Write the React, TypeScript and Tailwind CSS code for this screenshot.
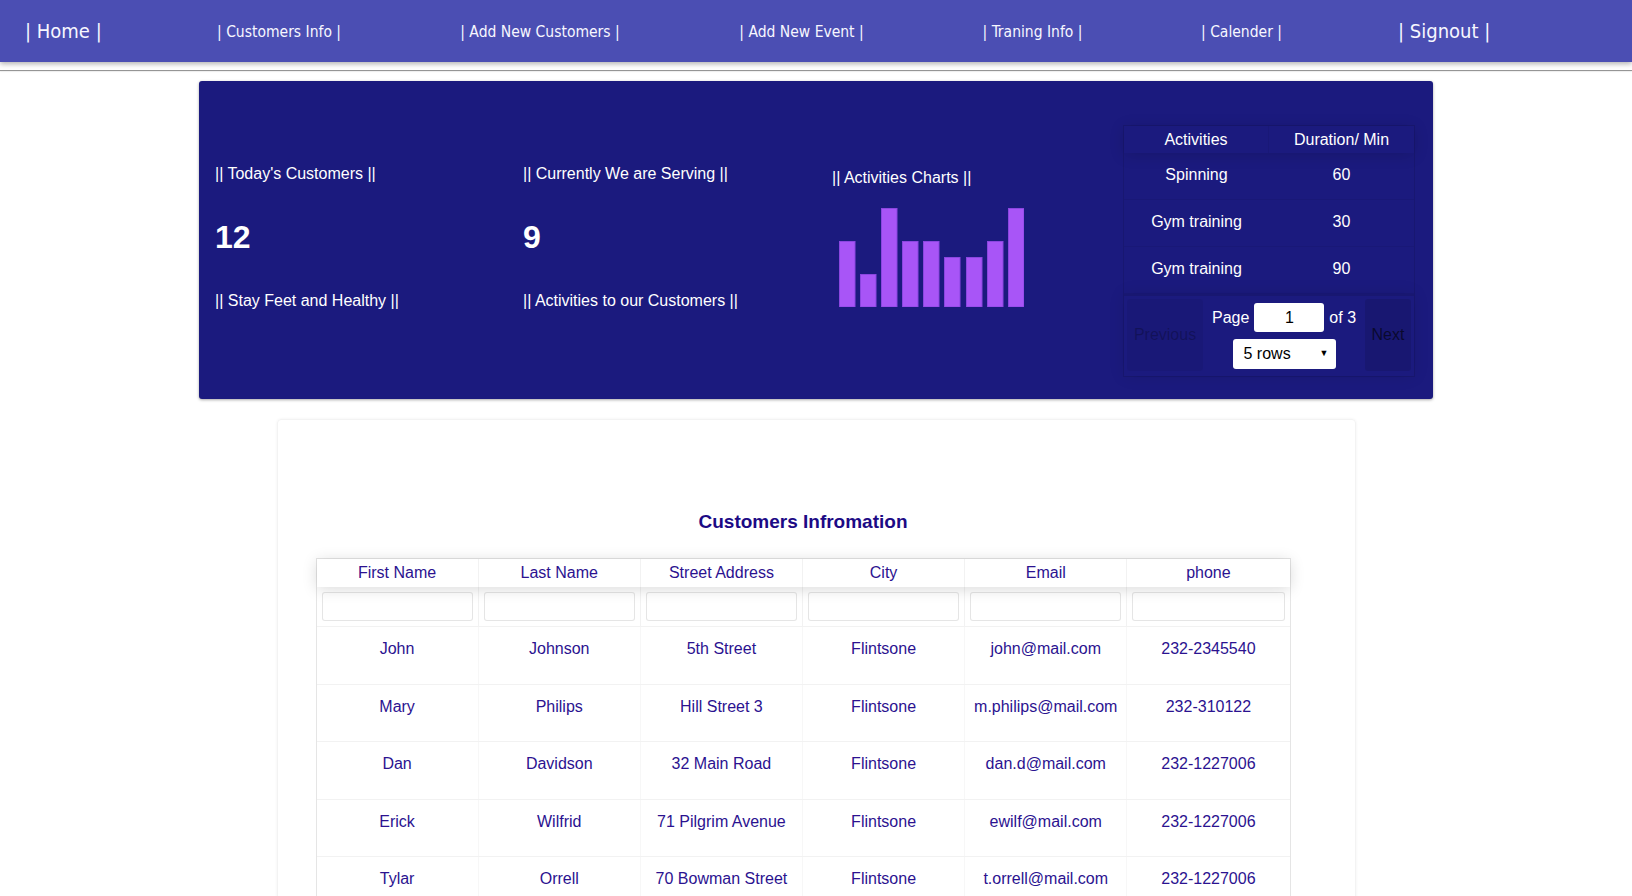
import React from "react";

const navLinks = [
  { label: "| Home |", w: "w-[74px]", big: true },
  { label: "| Customers Info |", w: "w-[124px]" },
  { label: "| Add New Customers |", w: "w-[162px]" },
  { label: "| Add New Event |", w: "w-[125px]" },
  { label: "| Traning Info |", w: "w-[101px]" },
  { label: "| Calender |", w: "w-[79px]" },
  { label: "| Signout |", w: "w-[90px]", big: true },
];

const activities = [
  ["Spinning", "60"],
  ["Gym training", "30"],
  ["Gym training", "90"],
];

const bars = [66, 33, 99, 66, 66, 50, 50, 66, 99];

const columns = ["First Name", "Last Name", "Street Address", "City", "Email", "phone"];

const customers = [
  ["John", "Johnson", "5th Street", "Flintsone", "john@mail.com", "232-2345540"],
  ["Mary", "Philips", "Hill Street 3", "Flintsone", "m.philips@mail.com", "232-310122"],
  ["Dan", "Davidson", "32 Main Road", "Flintsone", "dan.d@mail.com", "232-1227006"],
  ["Erick", "Wilfrid", "71 Pilgrim Avenue", "Flintsone", "ewilf@mail.com", "232-1227006"],
  ["Tylar", "Orrell", "70 Bowman Street", "Flintsone", "t.orrell@mail.com", "232-1227006"],
];

function Navbar() {
  return (
    <nav className="h-[62px] bg-[#4b4eb3] shadow-[0_2px_5px_rgba(0,0,0,0.3)] flex items-center pl-[25px] gap-[118px] text-[#f7f7ff] font-['Liberation_Sans_Narrow','DejaVu_Sans_Condensed',sans-serif]">
      {navLinks.map((l) => (
        <a
          key={l.label}
          className={`${l.w} whitespace-nowrap text-center ${l.big ? "text-[20px] -mt-[1px]" : "text-[15.5px] mt-[4px]"}`}
        >
          {l.label}
        </a>
      ))}
    </nav>
  );
}

function ActivitiesChart() {
  return (
    <svg width="185" height="99" viewBox="0 0 185 99" className="ml-[7px]">
      {bars.map((h, i) => (
        <rect
          key={i}
          x={i * 21 + (i >= 6 ? 1 : 0) + 0.5}
          y={99 - h + 0.5}
          width="15.5"
          height={h - 0.5}
          fill="#a855f7"
          stroke="#8b46e0"
          strokeWidth="1"
        />
      ))}
    </svg>
  );
}

function ActivitiesTable() {
  return (
    <div className="w-[292px] border border-[rgba(0,0,0,0.1)] text-[16px] text-white">
      {/* Header */}
      <div className="grid grid-cols-2 h-[27px] shadow-[0_2px_15px_rgba(0,0,0,0.15)] relative z-10">
        <div className="flex items-center justify-center border-r border-[rgba(0,0,0,0.05)]">Activities</div>
        <div className="flex items-center justify-center">Duration/ Min</div>
      </div>
      {activities.map(([name, min], i) => (
        <div key={i} className="grid grid-cols-2 h-[47px] border-b border-[rgba(0,0,0,0.05)] pt-[13px] leading-[18px]">
          <div className="text-center">{name}</div>
          <div className="text-center">{min}</div>
        </div>
      ))}
      {/* Pagination */}
      <div className="h-[82px] border-t-2 border-[rgba(0,0,0,0.1)] p-[3px] flex shadow-[0_0_15px_rgba(0,0,0,0.1)]">
        <div className="w-[76px] h-[72px] rounded-[3px] bg-[rgba(0,0,0,0.05)] flex items-center justify-center text-[rgba(0,0,0,0.25)]">
          Previous
        </div>
        <div className="flex-1 flex flex-col items-center pt-[4px]">
          <div className="flex items-center gap-[5px] h-[29px]">
            <span>Page</span>
            <div className="w-[70px] h-[29px] bg-white rounded-[3px] text-black flex items-center justify-center">1</div>
            <span>of 3</span>
          </div>
          <div className="mt-[7px] w-[103px] h-[30px] bg-white rounded-[3px] text-black flex items-center justify-between pl-[11px] pr-[7px]">
            <span>5 rows</span>
            <span className="text-[9px]">▼</span>
          </div>
        </div>
        <div className="w-[46px] h-[72px] rounded-[3px] bg-[rgba(0,0,0,0.1)] flex items-center justify-center text-[rgba(0,0,0,0.6)]">
          Next
        </div>
      </div>
    </div>
  );
}

function SummaryPanel() {
  return (
    <section className="mx-auto mt-[10px] w-[1234px] h-[318px] bg-[#1b1a7e] rounded-[3px] shadow-[0_1px_3px_rgba(0,0,0,0.35)] pl-4 pr-[18px] grid grid-cols-[308px_309px_291px_292px] items-start text-white text-[16px]">
      <div className="pt-[84px] flex flex-col gap-[36px] leading-[18px]">
        <p>|| Today's Customers ||</p>
        <p className="text-[32px] font-bold leading-[37px]">12</p>
        <p>|| Stay Feet and Healthy ||</p>
      </div>
      <div className="pt-[84px] flex flex-col gap-[36px] leading-[18px]">
        <p>|| Currently We are Serving ||</p>
        <p className="text-[32px] font-bold leading-[37px]">9</p>
        <p>|| Activities to our Customers ||</p>
      </div>
      <div className="pt-[88px] flex flex-col gap-[21px] leading-[18px]">
        <p>|| Activities Charts ||</p>
        <ActivitiesChart />
      </div>
      <div className="pt-[44px]">
        <ActivitiesTable />
      </div>
    </section>
  );
}

function CustomersCard() {
  return (
    <section className="mx-auto mt-[20px] w-[1079px] rounded-[4px] border border-[#f3f3f3] shadow-[0_0_3px_rgba(0,0,0,0.06)] pl-[38px] pr-[64px] pt-[91px] pb-10">
      <h3 className="text-center text-[19px] font-bold leading-[22px] text-[#1c0a85]">Customers Infromation</h3>
      <div className="mt-[25px] border border-[rgba(0,0,0,0.1)] text-[16px] text-[#2b1290]">
        <div className="grid grid-cols-6 h-[28px] relative z-10 bg-white shadow-[0_2px_15px_rgba(0,0,0,0.15)]">
          {columns.map((c, i) => (
            <div
              key={c}
              className={`flex items-center justify-center ${i < 5 ? "border-r border-[rgba(0,0,0,0.05)]" : ""}`}
            >
              {c}
            </div>
          ))}
        </div>
        <div className="grid grid-cols-6 h-[40px] border-b border-[rgba(0,0,0,0.05)]">
          {columns.map((c, i) => (
            <div
              key={c}
              className={`px-[5px] pt-[5px] ${i < 5 ? "border-r border-[rgba(0,0,0,0.05)]" : ""}`}
            >
              <div className="h-[29px] rounded-[3px] border border-[rgba(0,0,0,0.1)] bg-white" />
            </div>
          ))}
        </div>
        {customers.map((row, r) => (
          <div key={r} className="grid grid-cols-6 h-[57.5px] border-b border-[rgba(0,0,0,0.05)]">
            {row.map((cell, i) => (
              <div
                key={i}
                className={`text-center pt-[13px] leading-[18px] ${i < 5 ? "border-r border-[rgba(0,0,0,0.03)]" : ""}`}
              >
                {cell}
              </div>
            ))}
          </div>
        ))}
      </div>
    </section>
  );
}

export default function App() {
  return (
    <div className="min-h-screen bg-white font-['Liberation_Sans',Arial,sans-serif]">
      <Navbar />
      <div className="mt-[8px] border-t border-[#959595] shadow-[0_1px_1px_rgba(0,0,0,0.08)]" />
      <SummaryPanel />
      <CustomersCard />
    </div>
  );
}
